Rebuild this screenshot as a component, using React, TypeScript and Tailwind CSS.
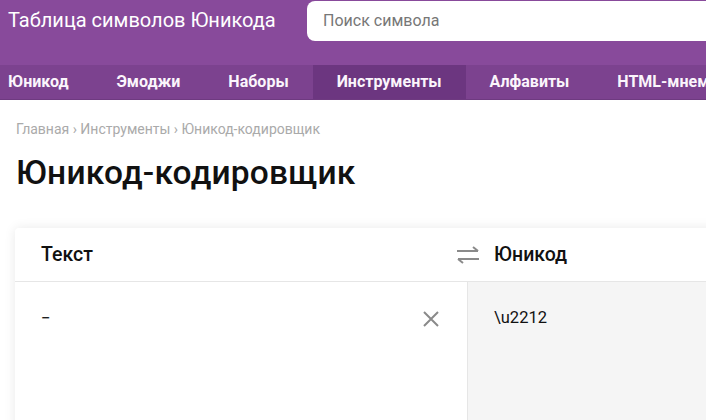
import React from "react";

const font = { fontFamily: "Roboto, 'Noto Sans', sans-serif" };

function SwapIcon() {
  return (
    <svg width="24" height="18" viewBox="0 0 24 18" fill="none" stroke="#8a8a8a" strokeWidth="2">
      <path d="M1 5h21" />
      <path d="M17 1l5 4" />
      <path d="M23 13H2" />
      <path d="M7 17l-5-4" />
    </svg>
  );
}

function CloseIcon() {
  return (
    <svg width="18" height="18" viewBox="0 0 18 18" fill="none" stroke="#8a8a8a" strokeWidth="2">
      <path d="M2 2l14 14M16 2L2 16" />
    </svg>
  );
}

export default function App() {
  const nav = ["Юникод", "Эмоджи", "Наборы", "Инструменты", "Алфавиты", "HTML-мнемоники"];
  return (
    <div className="w-[706px] h-[420px] overflow-hidden bg-white" style={font}>
      <div className="w-[1000px]">
        <header className="bg-[#884a9b] h-[65px] flex items-start">
          <div className="text-white text-[20px] pl-[8px] pt-[8px] leading-[24px] w-[307px]">Таблица символов Юникода</div>
          <div className="mt-[1px] h-[40px] w-[600px] bg-white rounded-[8px] flex items-center pl-[16px] text-[16px] text-[#777]">
            Поиск символа
          </div>
        </header>
        <nav className="bg-[#7c428f] h-[35px] flex border-b border-[#6e3a80]">
          {nav.map((n, i) => (
            <div
              key={n}
              className={
                "h-full flex items-center text-[#fbf5fc] font-bold text-[16px] whitespace-nowrap " +
                (i === 3 ? "bg-[#6c3680] px-[24px]" : i === 0 ? "pl-[8px] pr-[24px]" : "px-[24px]")
              }
            >
              {n}
            </div>
          ))}
        </nav>
        <div className="px-[16px]">
          <div className="pt-[20px] text-[14px] text-[#aaa] leading-[18px]">
            Главная › Инструменты › Юникод-кодировщик
          </div>
          <h1 className="mt-[16px] text-[33.5px] font-medium text-[#111] leading-[38px] tracking-[0.2px]">Юникод-кодировщик</h1>
        </div>
        <div className="ml-[15px] mt-[36px] w-[904px] bg-white rounded-[4px] shadow-[0_0_12px_rgba(0,0,0,0.09)]">
          <div className="grid grid-cols-2 h-[54px] border-b border-[#e6e6e6]">
            <div className="flex items-center pl-[26px] text-[19.5px] font-medium text-[#111]">Текст</div>
            <div className="relative flex items-center pl-[27px] text-[19.5px] font-medium text-[#111]">
              <div className="absolute left-[-11px] top-[18px]">
                <SwapIcon />
              </div>
              Юникод
            </div>
          </div>
          <div className="grid grid-cols-2 h-[150px]">
            <div className="flex justify-between items-start pl-[26px] pr-[27px] pt-[26px] text-[17px] text-[#111]">
              <span className="leading-[20px]">−</span>
              <span className="mt-[2px]"><CloseIcon /></span>
            </div>
            <div className="bg-[#f5f5f5] border-l border-[#e6e6e6] pl-[26px] pt-[26px] text-[16.5px] text-[#111] leading-[20px]">
              \u2212
            </div>
          </div>
        </div>
      </div>
    </div>
  );
}
